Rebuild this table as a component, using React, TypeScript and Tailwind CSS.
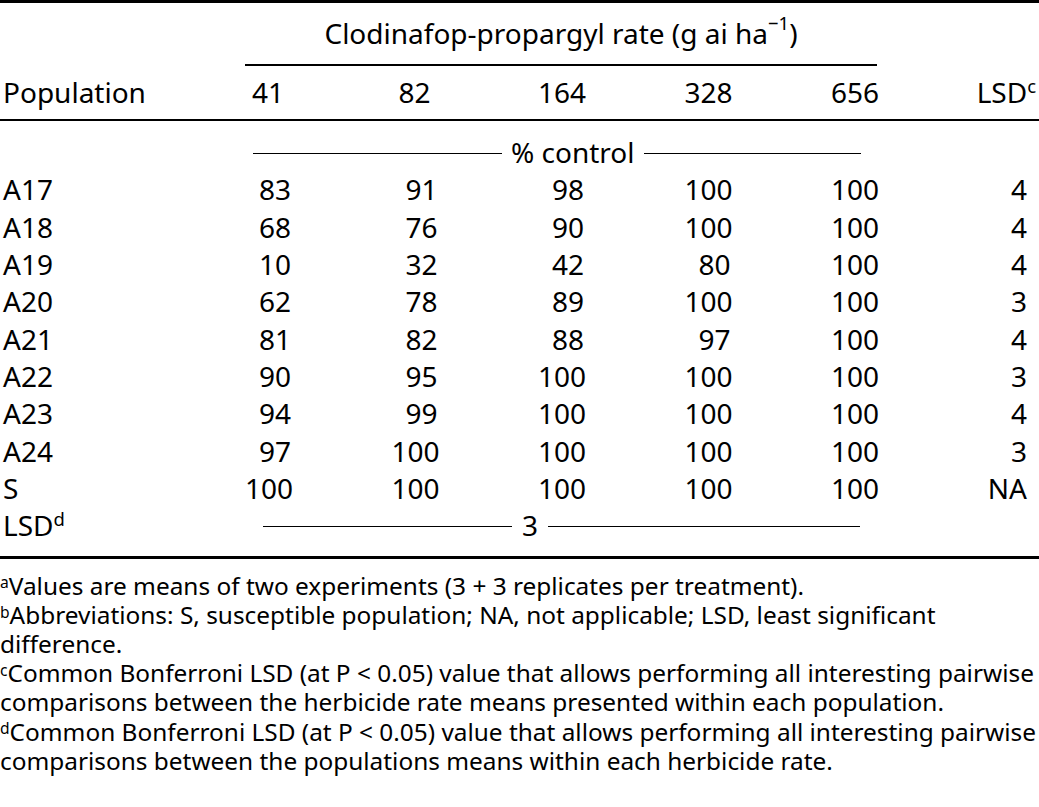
import React from "react";

type Row = {
  pop: string;
  values: string[];
  lsd: string;
};

const rows: Row[] = [
  { pop: "A17", values: ["83", "91", "98", "100", "100"], lsd: "4" },
  { pop: "A18", values: ["68", "76", "90", "100", "100"], lsd: "4" },
  { pop: "A19", values: ["10", "32", "42", "80", "100"], lsd: "4" },
  { pop: "A20", values: ["62", "78", "89", "100", "100"], lsd: "3" },
  { pop: "A21", values: ["81", "82", "88", "97", "100"], lsd: "4" },
  { pop: "A22", values: ["90", "95", "100", "100", "100"], lsd: "3" },
  { pop: "A23", values: ["94", "99", "100", "100", "100"], lsd: "4" },
  { pop: "A24", values: ["97", "100", "100", "100", "100"], lsd: "3" },
  { pop: "S", values: ["100", "100", "100", "100", "100"], lsd: "NA" },
];

const rates = ["41", "82", "164", "328", "656"];

const Sup = ({ children }: { children: React.ReactNode }) => (
  <span className="relative -top-[0.55em] text-[0.66em] leading-none">{children}</span>
);

const NoteSup = ({ children }: { children: React.ReactNode }) => (
  <span className="relative -top-[0.4em] text-[0.64em] leading-none">{children}</span>
);

const App: React.FC = () => {
  return (
    <div
      className="w-[1039px] h-[807px] bg-white text-black overflow-hidden"
      style={{ fontFamily: '"Noto Sans", "Open Sans", sans-serif' }}
    >
      {/* table */}
      <div className="border-t-[3px] border-b-[3px] border-black text-[28px] leading-[37.33px]">
        {/* spanner */}
        <div className="flex">
          <div className="w-[245px] shrink-0" />
          <div className="w-[632px] shrink-0">
            <div className="h-[61px] flex items-center justify-center whitespace-nowrap">
              Clodinafop-propargyl rate (g ai ha<Sup>−1</Sup>)
            </div>
            <div className="border-t-2 border-black" />
          </div>
        </div>

        {/* column heads */}
        <div className="flex h-[55px] items-center border-b-2 border-black">
          <div className="w-[245px] shrink-0 pl-[3px]">Population</div>
          <div className="flex gap-[100.5px]">
            {rates.map((r) => (
              <div key={r} className="w-[46px] text-center whitespace-nowrap">
                {r}
              </div>
            ))}
          </div>
          <div className="flex-1 text-right pr-[3px] whitespace-nowrap">
            LSD<Sup>c</Sup>
          </div>
        </div>

        <div className="pt-[13px] pb-[11px]">
          {/* % control */}
          <div className="flex h-[37.33px] items-center">
            <div className="w-[253px] shrink-0" />
            <div className="w-[249px] border-t-[1.5px] border-black mt-[2px]" />
            <div className="px-[9px] whitespace-nowrap">% control</div>
            <div className="w-[217px] border-t-[1.5px] border-black mt-[2px]" />
          </div>

          {rows.map((row) => (
            <div key={row.pop} className="flex h-[37.33px] items-center">
              <div className="w-[245px] shrink-0 pl-[3px]">{row.pop}</div>
              <div className="flex gap-[100.5px]">
                {row.values.map((v, i) => (
                  <div key={i} className="w-[46px] text-right whitespace-nowrap">
                    {v}
                  </div>
                ))}
              </div>
              <div className="flex-1 text-right pr-[12px]">{row.lsd}</div>
            </div>
          ))}

          {/* LSD between populations */}
          <div className="flex h-[37.33px] items-center">
            <div className="w-[263px] shrink-0 pl-[3px] whitespace-nowrap">
              LSD<Sup>d</Sup>
            </div>
            <div className="w-[249px] border-t-[1.5px] border-black mt-[2px]" />
            <div className="px-[10px]">3</div>
            <div className="w-[312px] border-t-[1.5px] border-black mt-[2px]" />
          </div>
        </div>
      </div>

      {/* footnotes */}
      <div className="mt-[12px] text-[24.4px] leading-[29.2px] whitespace-nowrap">
        <div>
          <NoteSup>a</NoteSup>Values are means of two experiments (3 + 3 replicates per treatment).
        </div>
        <div>
          <NoteSup>b</NoteSup>Abbreviations: S, susceptible population; NA, not applicable; LSD, least significant
        </div>
        <div>difference.</div>
        <div>
          <NoteSup>c</NoteSup>Common Bonferroni LSD (at P &lt; 0.05) value that allows performing all interesting pairwise
        </div>
        <div>comparisons between the herbicide rate means presented within each population.</div>
        <div>
          <NoteSup>d</NoteSup>Common Bonferroni LSD (at P &lt; 0.05) value that allows performing all interesting pairwise
        </div>
        <div>comparisons between the populations means within each herbicide rate.</div>
      </div>
    </div>
  );
};

export default App;
